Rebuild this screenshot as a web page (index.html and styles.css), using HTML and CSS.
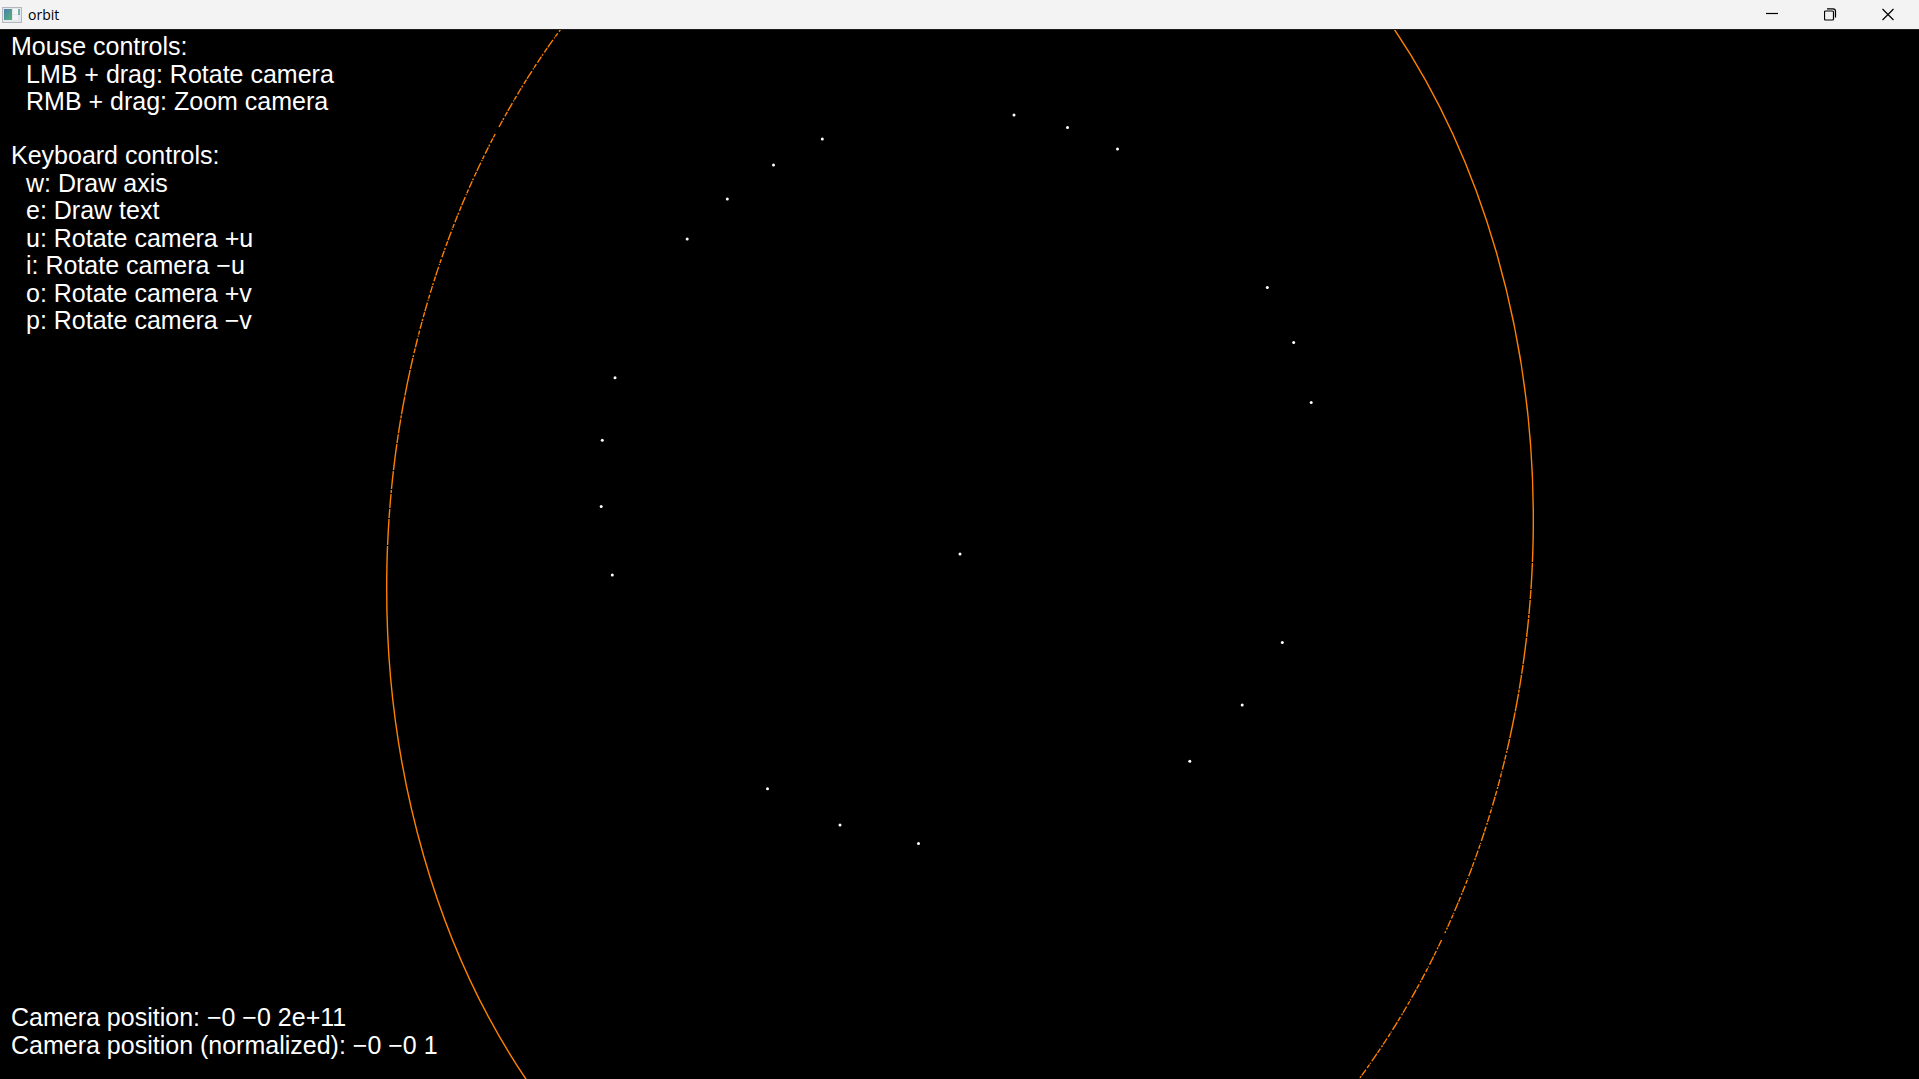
FILE: index.html
```html
<!DOCTYPE html>
<html lang="en">
<head>
<meta charset="utf-8">
<title>orbit</title>
<link rel="stylesheet" href="styles.css">
</head>
<body>
<header class="titlebar">
  <svg class="app-icon" width="20" height="16" viewBox="0 0 20 16" aria-hidden="true">
    <defs><linearGradient id="pane" x1="0" y1="0" x2="1" y2="1"><stop offset="0" stop-color="#4a7fae"/><stop offset="1" stop-color="#55b377"/></linearGradient></defs>
    <rect width="20" height="16" fill="#b4b8be"/>
    <rect x="1" y="1" width="18" height="14" fill="#e4e7ec"/>
    <rect x="2" y="2" width="8" height="11" fill="url(#pane)"/>
    <rect x="11" y="2" width="5" height="5" fill="#f3f4f5"/>
    <rect x="11" y="8" width="5" height="5" fill="#f3f4f5"/>
    <rect x="16" y="2" width="2" height="6" fill="#76b3a4"/>
  </svg>
  <h1 class="title">orbit</h1>
  <div class="window-buttons">
    <button class="window-button" type="button" aria-label="Minimize"><svg width="13" height="13" viewBox="0 0 13 13"><path d="M0 5.500H12"/></svg></button>
    <button class="window-button" type="button" aria-label="Restore"><svg width="13" height="13" viewBox="0 0 13 13"><rect x="0.500" y="3" width="9" height="9" rx="1"/><path d="M3 0.800H9Q11.500 0.800 11.500 3.300V9.500"/></svg></button>
    <button class="window-button" type="button" aria-label="Close"><svg width="13" height="13" viewBox="0 0 13 13"><path d="M0.500 1L11.500 12M11.500 1L0.500 12"/></svg></button>
  </div>
</header>
<main class="viewport">
  <svg class="scene" viewBox="0 29 1919 1050" preserveAspectRatio="xMidYMid slice" aria-hidden="true">
    <g class="orbit" transform="matrix(1 0 -0.0333 1 960 554)">
      <path d="M-572.700 10A572.700 765 0 0 0 -400 547.500"/>
      <path d="M572.700 -10A572.700 765 0 0 0 400 -547.500"/>
      <path class="orbit-long" d="M-572.700 10A572.700 765 0 0 1 -555 -189"/>
      <path class="orbit-long" d="M572.700 -10A572.700 765 0 0 1 555 189"/>
      <path class="orbit-short" d="M-555 -189A572.700 765 0 0 1 -478.800 -420"/>
      <path class="orbit-short" d="M555 189A572.700 765 0 0 1 497.500 379"/>
      <path class="orbit-short" d="M-475.200 -427A572.700 765 0 0 1 -400 -547.500"/>
      <path class="orbit-short" d="M494.400 386A572.700 765 0 0 1 400 547.500"/>
    </g>
    <g class="points">
      <circle cx="1014" cy="115" r="1.500"/><circle cx="1067.500" cy="127.500" r="1.500"/><circle cx="1117.500" cy="149" r="1.500"/>
      <circle cx="822.300" cy="139" r="1.500"/><circle cx="773.500" cy="165" r="1.500"/><circle cx="727.300" cy="199" r="1.500"/>
      <circle cx="687.200" cy="239" r="1.500"/><circle cx="1267.300" cy="287.500" r="1.500"/><circle cx="1293.700" cy="342.500" r="1.500"/>
      <circle cx="1311.200" cy="402.500" r="1.500"/><circle cx="615" cy="377.700" r="1.500"/><circle cx="602.300" cy="440.300" r="1.500"/>
      <circle cx="601.200" cy="506.600" r="1.500"/><circle cx="612.300" cy="575" r="1.500"/><circle cx="960" cy="554" r="1.500"/>
      <circle cx="1282.300" cy="642.500" r="1.500"/><circle cx="1242.200" cy="705" r="1.500"/><circle cx="1189.800" cy="761.300" r="1.500"/>
      <circle cx="767.500" cy="788.800" r="1.500"/><circle cx="840" cy="825" r="1.500"/><circle cx="918.500" cy="843.500" r="1.500"/>
    </g>
  </svg>
  <div class="overlay">
    <div class="help">
      <section>
        <h2 class="line">Mouse controls:</h2>
        <ul class="list">
          <li>LMB + drag: Rotate camera</li>
          <li>RMB + drag: Zoom camera</li>
        </ul>
      </section>
      <section>
        <h2 class="line">Keyboard controls:</h2>
        <ul class="list">
          <li>w: Draw axis</li>
          <li>e: Draw text</li>
          <li>u: Rotate camera +u</li>
          <li>i: Rotate camera −u</li>
          <li>o: Rotate camera +v</li>
          <li>p: Rotate camera −v</li>
        </ul>
      </section>
    </div>
    <div class="status">
      <p class="line">Camera position: −0 −0 2e+11</p>
      <p class="line">Camera position (normalized): −0 −0 1</p>
    </div>
  </div>
</main>
</body>
</html>
```
FILE: styles.css
```css
* { box-sizing: border-box; }

body {
  margin: 0;
  min-height: 100vh;
  display: flex;
  flex-direction: column;
  background: #000;
}

h1, h2, p, ul {
  margin: 0;
  padding: 0;
  font-size: inherit;
  font-weight: 400;
  list-style: none;
}

.titlebar {
  display: flex;
  align-items: center;
  height: 29px;
  padding: 0 2px;
  gap: 6px;
  background: #f3f3f3;
  color: #000;
  font: 14px "Open Sans", "Noto Sans", sans-serif;
}

.title { flex: 1; }

.window-buttons {
  display: flex;
  height: 100%;
}

.window-button {
  display: flex;
  align-items: center;
  justify-content: center;
  width: 58px;
  padding: 0;
  border: 0;
  background: none;
}

.window-button svg {
  fill: none;
  stroke: #000;
  stroke-width: 1.2;
}

.viewport {
  position: relative;
  display: flex;
  flex: 1;
  border-top: 1px solid #1a1a1a;
  overflow: hidden;
}

.scene {
  position: absolute;
  inset: -1px 0 0;
  width: 100%;
  height: calc(100% + 1px);
}

.orbit {
  fill: none;
  stroke: #ff8000;
  stroke-width: 1.4;
}

.orbit-long { stroke-dasharray: 18 1 26 1 9 1 14 1 3 1; }
.orbit-short { stroke-dasharray: 7 1 2 2 5 1 9 2 1 1 4 2; }

.points { fill: #fff; }

.overlay {
  position: relative;
  display: flex;
  flex: 1;
  flex-direction: column;
  justify-content: space-between;
  padding: 2px 11px 20px;
  color: #fff;
  font: 25px/28px "Liberation Sans", Arial, sans-serif;
}

.help {
  display: flex;
  flex-direction: column;
  gap: 26px;
}

.list { padding-left: 15px; }
.list li:nth-child(even) { line-height: 27px; }
```
